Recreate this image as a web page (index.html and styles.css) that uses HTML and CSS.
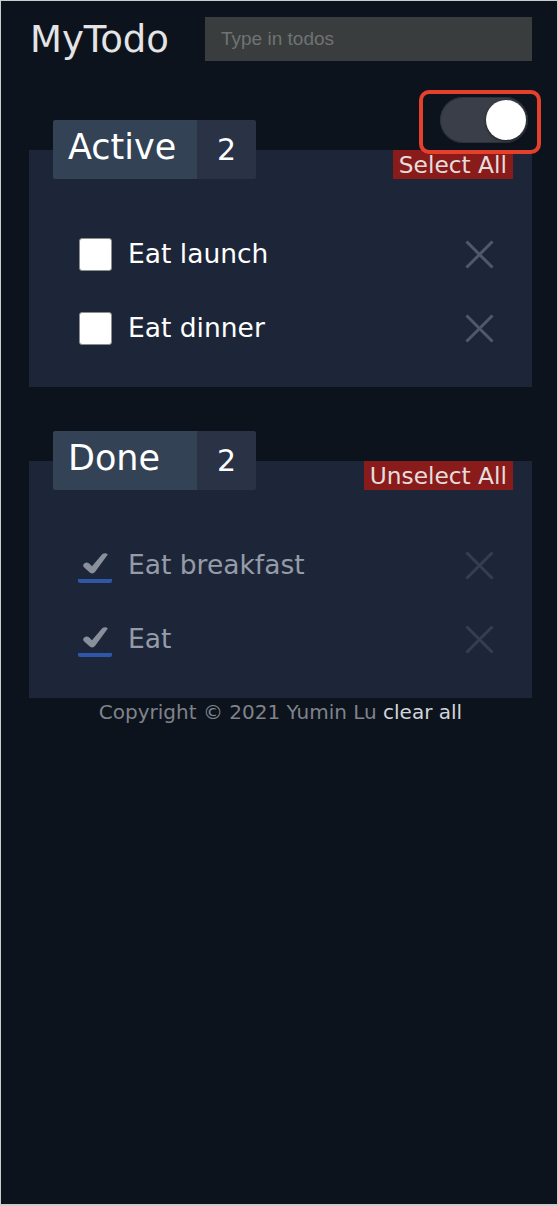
FILE: index.html
```html
<!DOCTYPE html>
<html lang="en">
<head>
<meta charset="utf-8">
<title>MyTodo</title>
<link rel="stylesheet" href="styles.css">
</head>
<body>
<div class="app">
  <header class="top">
    <h1 class="brand">MyTodo</h1>
    <input class="new-todo" type="text" placeholder="Type in todos">
  </header>

  <div class="toggle-row">
    <div class="toggle-focus">
      <div class="toggle"><span class="knob"></span></div>
    </div>
  </div>

  <section class="group">
    <div class="group-head">
      <div class="tag"><span class="tag-name">Active</span><span class="tag-count">2</span></div>
      <button class="bulk" type="button">Select All</button>
    </div>
    <ul class="list">
      <li class="item">
        <span class="check"></span>
        <span class="label">Eat launch</span>
        <svg class="remove" viewBox="0 0 29 29" aria-hidden="true"><path d="M1.5 1.5 L27.5 27.5 M27.5 1.5 L1.5 27.5"/></svg>
      </li>
      <li class="item">
        <span class="check"></span>
        <span class="label">Eat dinner</span>
        <svg class="remove" viewBox="0 0 29 29" aria-hidden="true"><path d="M1.5 1.5 L27.5 27.5 M27.5 1.5 L1.5 27.5"/></svg>
      </li>
    </ul>
  </section>

  <section class="group group-done">
    <div class="group-head">
      <div class="tag"><span class="tag-name">Done</span><span class="tag-count">2</span></div>
      <button class="bulk" type="button">Unselect All</button>
    </div>
    <ul class="list">
      <li class="item item-done">
        <span class="check check-done"><svg class="tick" viewBox="0 0 25 21" aria-hidden="true"><path d="M0.4 11.4 Q2.6 8.2 6.2 10.4 L9 13.2 L19.2 1.2 Q22.4 -1 24.8 1.4 L12 19 Q9.6 21.6 6.8 19.4 L1.2 14.4 Q-0.3 13 0.4 11.4 Z"/></svg></span>
        <span class="label">Eat breakfast</span>
        <svg class="remove" viewBox="0 0 29 29" aria-hidden="true"><path d="M1.5 1.5 L27.5 27.5 M27.5 1.5 L1.5 27.5"/></svg>
      </li>
      <li class="item item-done">
        <span class="check check-done"><svg class="tick" viewBox="0 0 25 21" aria-hidden="true"><path d="M0.4 11.4 Q2.6 8.2 6.2 10.4 L9 13.2 L19.2 1.2 Q22.4 -1 24.8 1.4 L12 19 Q9.6 21.6 6.8 19.4 L1.2 14.4 Q-0.3 13 0.4 11.4 Z"/></svg></span>
        <span class="label">Eat</span>
        <svg class="remove" viewBox="0 0 29 29" aria-hidden="true"><path d="M1.5 1.5 L27.5 27.5 M27.5 1.5 L1.5 27.5"/></svg>
      </li>
    </ul>
  </section>

  <footer class="footer">Copyright &copy; 2021 Yumin Lu <span class="clear">clear all</span></footer>
</div>
</body>
</html>
```

FILE: styles.css
```css
* { box-sizing: border-box; }

html, body {
  margin: 0;
  padding: 0;
  background: #cfcfcf;
}

body {
  font-family: "DejaVu Sans", sans-serif;
}

.app {
  width: 558px;
  height: 1206px;
  border: 1px solid #cdcdcd;
  border-bottom-width: 2px;
  background: #0d131d;
  padding: 16px 25px 0 28px;
  display: flex;
  flex-direction: column;
}

/* header */
.top {
  display: flex;
  align-items: center;
  height: 44px;
}

.brand {
  margin: 0 0 0 1px;
  padding-top: 1px;
  font-size: 37px;
  font-weight: 400;
  line-height: 44px;
  color: #e4e4e4;
}

.new-todo {
  margin-left: auto;
  width: 327px;
  height: 44px;
  border: 0;
  border-radius: 0;
  background: #3a3d3d;
  padding: 0 16px;
  font: 19px "Liberation Sans", Arial, sans-serif;
  color: #dddddd;
  outline: none;
}

.new-todo::placeholder { color: #6f7373; }

/* theme toggle */
.toggle-row {
  display: flex;
  justify-content: flex-end;
  margin: 29px -9px -4px 0;
  position: relative;
  z-index: 2;
}

.toggle-focus {
  width: 122px;
  height: 64px;
  border: 4px solid #e5402b;
  border-radius: 10px;
  background: #0d131d;
  padding: 3px 9px 7px 17px;
}

.toggle {
  width: 88px;
  height: 46px;
  border-radius: 23px;
  background: #3a3e48;
  box-shadow: inset 0 0 0 1px #2c3039;
  display: flex;
  align-items: center;
  justify-content: flex-end;
  padding: 0 2px;
}

.knob {
  width: 40px;
  height: 40px;
  border-radius: 50%;
  background: #ffffff;
  box-shadow: 0 1px 3px rgba(0, 0, 0, 0.5);
}

/* groups */
.group {
  background: #1d2639;
  display: flex;
  flex-direction: column;
}

.group-done { margin-top: 74px; }

.group-head {
  margin-top: -30px;
  display: flex;
  align-items: flex-end;
  justify-content: space-between;
  padding: 0 19px 0 24px;
}

.tag {
  display: flex;
  height: 59px;
  border-radius: 2px;
  overflow: hidden;
}

.tag-name {
  width: 144px;
  background: #334254;
  color: #ffffff;
  font-size: 35px;
  line-height: 55px;
  padding: 0 0 4px 15px;
}

.tag-count {
  width: 59px;
  background: #2a3245;
  color: #ffffff;
  font-size: 30px;
  line-height: 55px;
  padding: 2px 0;
  text-align: center;
}

.bulk {
  height: 29px;
  border: 0;
  border-radius: 0;
  background: #891c1b;
  color: #e6dcdc;
  font-family: "DejaVu Sans", sans-serif;
  font-size: 23.3px;
  line-height: 29px;
  padding: 0 6px;
  margin: 0;
}

.list {
  list-style: none;
  margin: 0;
  padding: 38px 38px 22px 50px;
}

.item {
  display: flex;
  align-items: center;
  height: 74px;
}

.check {
  width: 33px;
  height: 33px;
  flex: none;
  background: #ffffff;
  border: 1px solid #8d8d8d;
  border-radius: 3px;
}

.check-done {
  width: 34px;
  background: transparent;
  border: 0;
  border-bottom: 4px solid #2f56a8;
  border-radius: 2px;
  display: flex;
  justify-content: center;
  align-items: flex-end;
  padding-bottom: 5px;
  margin-top: 2px;
  margin-left: -1px;
}

.tick {
  width: 25px;
  height: 21px;
  fill: #8a909b;
}

.label {
  flex: 1;
  margin-left: 16px;
  font-size: 26.5px;
  line-height: 1.2;
  color: #ffffff;
}

.item-done .label { color: #969ca7; }

.remove {
  width: 29px;
  height: 29px;
  flex: none;
  fill: none;
  stroke: #4e596c;
  stroke-width: 3;
}

.item-done .remove { stroke: #343e51; }

/* footer */
.footer {
  text-align: center;
  font-size: 20px;
  line-height: 26px;
  padding-top: 1px;
  color: #7f838a;
}

.clear { color: #d2d5da; }
```
